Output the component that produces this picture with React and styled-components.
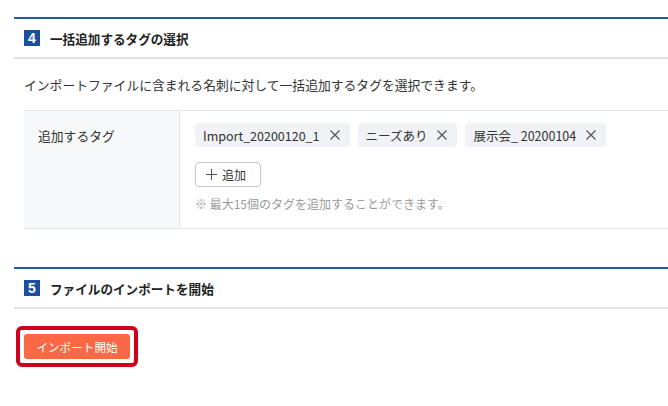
import React from "react";
import styled, { createGlobalStyle } from "styled-components";

const Global = createGlobalStyle`
  html, body { margin: 0; padding: 0; background: #fff; }
  body { font-family: "Noto Sans CJK JP", "Noto Sans", sans-serif; color: #333; }
`;

const Page = styled.div`
  padding: 17px 0 0 14px;
  width: 654px;
`;

const Section = styled.section`
  border-top: 2px solid #1f5ba6;
`;

const Header = styled.div`
  display: flex;
  align-items: center;
  gap: 10px;
  height: 38px;
  padding-left: 10px;
  border-bottom: 2px solid #e3e3e3;
`;

const Num = styled.span`
  display: inline-flex;
  align-items: center;
  justify-content: center;
  width: 16px;
  height: 16px;
  background: #1b4f9c;
  color: #fff;
  font-family: "Liberation Sans", Arial, sans-serif;
  font-weight: 700;
  font-size: 14px;
  line-height: 1;
`;

const Title = styled.h2`
  margin: 0;
  font-size: 12.6px;
  font-weight: 700;
  color: #222;
`;

const Body = styled.div`
  padding-left: 10px;
`;

const Desc = styled.p`
  margin: 0;
  height: 51px;
  display: flex;
  align-items: center;
  font-size: 12.8px;
  color: #333;
`;

const Table = styled.div`
  display: grid;
  grid-template-columns: 156px 1fr;
  border-top: 1px solid #e6e6e6;
  border-bottom: 1px solid #e6e6e6;
  margin-bottom: 38px;
`;

const LabelCell = styled.div`
  background: #f7f8f9;
  border-right: 1px solid #e6e6e6;
  padding: 15px 14px;
  font-size: 12.8px;
  color: #333;
`;

const ValueCell = styled.div`
  padding: 12px 16px 15px 15px;
  display: flex;
  flex-direction: column;
  align-items: flex-start;
`;

const Tags = styled.div`
  display: flex;
  gap: 8px;
`;

const Tag = styled.span`
  display: inline-flex;
  align-items: center;
  gap: 10px;
  height: 24px;
  padding: 0 10px 0 8px;
  background: #f0f2f5;
  border-radius: 4px;
  font-size: 12.5px;
  color: #333;
  white-space: nowrap;
`;

const AddButton = styled.button`
  margin-top: 15px;
  display: inline-flex;
  align-items: center;
  gap: 5px;
  height: 25px;
  width: 66px;
  padding: 0 0 0 10px;
  background: #fff;
  border: 1px solid #c8c8c8;
  border-radius: 4px;
  font-family: inherit;
  font-size: 12px;
  color: #333;
`;

const Note = styled.p`
  margin: 8px 0 0;
  font-size: 12px;
  color: #9a9a9a;
  line-height: 18px;
`;

const Highlight = styled.div`
  display: inline-block;
  margin: 17px 0 0 2px;
  padding: 4px;
  border: 4px solid #d0021b;
  border-radius: 6px;
`;

const StartButton = styled.button`
  display: block;
  width: 106px;
  height: 25px;
  border: none;
  border-radius: 3px;
  background: #fb6846;
  color: #fff;
  font-family: inherit;
  font-size: 11.6px;
  padding: 0;
`;

const Cross = () => (
  <svg width="10" height="10" viewBox="0 0 10 10">
    <path d="M0.5 0.5 L9.5 9.5 M9.5 0.5 L0.5 9.5" stroke="#555" strokeWidth="1.2" fill="none" />
  </svg>
);

const Plus = () => (
  <svg width="11" height="11" viewBox="0 0 11 11">
    <path d="M5.5 0 V11 M0 5.5 H11" stroke="#555" strokeWidth="1.1" fill="none" />
  </svg>
);

const tags = ["Import_20200120_1", "ニーズあり", "展示会_ 20200104"];

export default function App() {
  return (
    <Page>
      <Global />
      <Section>
        <Header>
          <Num>4</Num>
          <Title>一括追加するタグの選択</Title>
        </Header>
        <Body>
          <Desc>インポートファイルに含まれる名刺に対して一括追加するタグを選択できます。</Desc>
          <Table>
            <LabelCell>追加するタグ</LabelCell>
            <ValueCell>
              <Tags>
                {tags.map((t) => (
                  <Tag key={t}>
                    {t}
                    <Cross />
                  </Tag>
                ))}
              </Tags>
              <AddButton>
                <Plus />
                追加
              </AddButton>
              <Note>※ 最大15個のタグを追加することができます。</Note>
            </ValueCell>
          </Table>
        </Body>
      </Section>
      <Section>
        <Header>
          <Num>5</Num>
          <Title>ファイルのインポートを開始</Title>
        </Header>
        <Highlight>
          <StartButton>インポート開始</StartButton>
        </Highlight>
      </Section>
    </Page>
  );
}
